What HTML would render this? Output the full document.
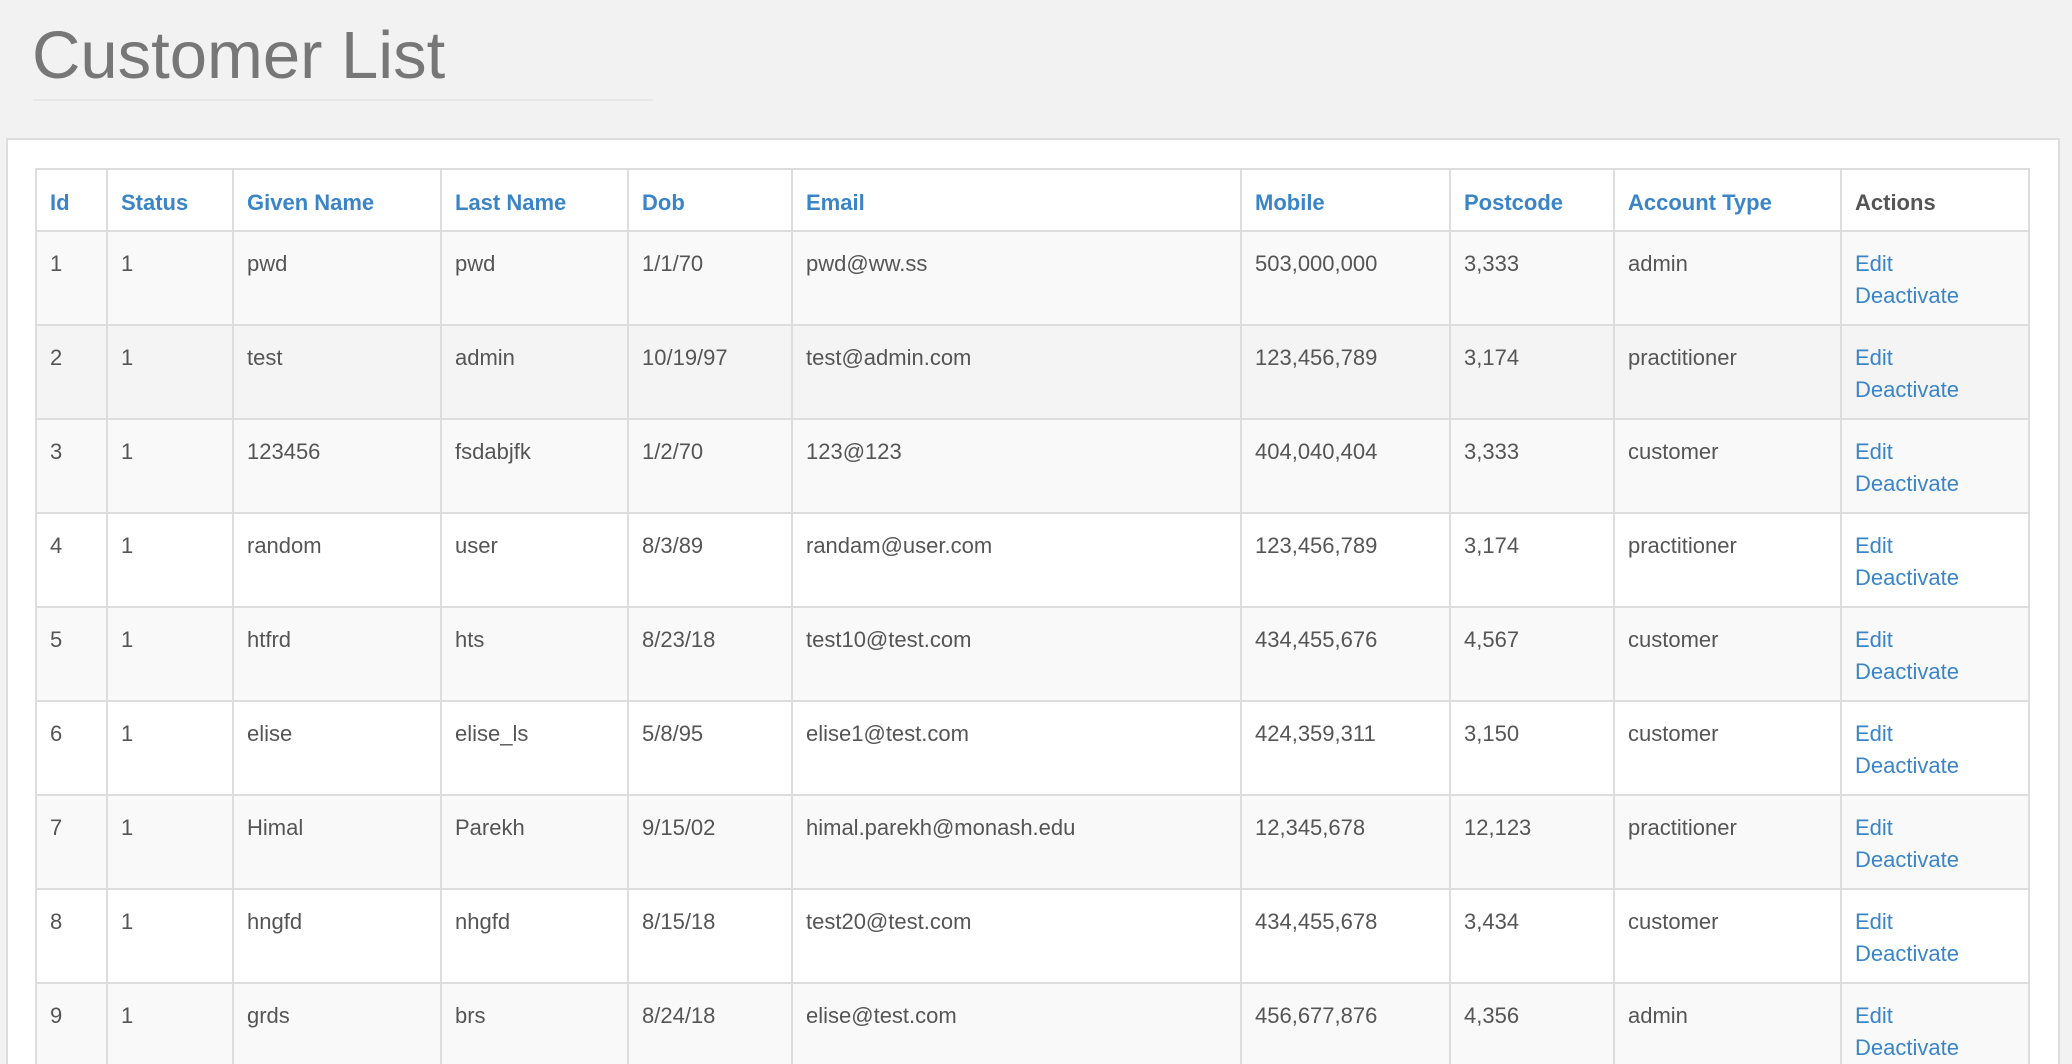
<!DOCTYPE html>
<html><head><meta charset="utf-8"><style>
*{margin:0;padding:0;box-sizing:border-box}
html,body{width:2072px;height:1064px;overflow:hidden;background:#f2f2f2;font-family:"Liberation Sans",Arial,sans-serif}
#wrap{position:relative;width:2072px;height:1064px;overflow:hidden}
h1{position:absolute;left:32px;top:22px;font-size:67px;line-height:68px;font-weight:normal;color:#777}
.hr{position:absolute;left:33px;top:99px;width:620px;height:2px;background:#e8e8e8}
.panel{position:absolute;left:6px;top:138px;width:2054px;height:940px;background:#fff;border:2px solid #ddd}
.clip{position:absolute;left:0;top:0;width:2072px;height:1064px;overflow:hidden}
table{position:absolute;left:35px;top:168px;border-collapse:collapse;table-layout:fixed;width:1995px;font-size:22px;color:#555}
td,th{border:2px solid #ddd;padding:16px 13px 10px 13px;line-height:32px;vertical-align:top;text-align:left;white-space:nowrap;overflow:hidden}
th{font-weight:bold;color:#3a84c8;height:62px;padding-top:17px;padding-bottom:9px}
th.a{color:#555}
tbody tr{height:94px}
tbody tr:nth-child(odd){background:#f9f9f9}
tbody tr.h{background:#f4f4f4}
a{color:#3a84c8;text-decoration:none}
</style></head><body><div id="wrap">
<h1>Customer List</h1>
<div class="hr"></div>
<div class="clip">
<div class="panel"></div>
<table>
<colgroup><col style="width:71px"><col style="width:126px"><col style="width:208px"><col style="width:187px"><col style="width:164px"><col style="width:449px"><col style="width:209px"><col style="width:164px"><col style="width:227px"><col style="width:188px"></colgroup>
<thead><tr><th>Id</th><th>Status</th><th>Given Name</th><th>Last Name</th><th>Dob</th><th>Email</th><th>Mobile</th><th>Postcode</th><th>Account Type</th><th class="a">Actions</th></tr></thead>
<tbody>
<tr><td>1</td><td>1</td><td>pwd</td><td>pwd</td><td>1/1/70</td><td>pwd@ww.ss</td><td>503,000,000</td><td>3,333</td><td>admin</td><td><a>Edit</a><br><a>Deactivate</a></td></tr>
<tr class="h"><td>2</td><td>1</td><td>test</td><td>admin</td><td>10/19/97</td><td>test@admin.com</td><td>123,456,789</td><td>3,174</td><td>practitioner</td><td><a>Edit</a><br><a>Deactivate</a></td></tr>
<tr><td>3</td><td>1</td><td>123456</td><td>fsdabjfk</td><td>1/2/70</td><td>123@123</td><td>404,040,404</td><td>3,333</td><td>customer</td><td><a>Edit</a><br><a>Deactivate</a></td></tr>
<tr><td>4</td><td>1</td><td>random</td><td>user</td><td>8/3/89</td><td>randam@user.com</td><td>123,456,789</td><td>3,174</td><td>practitioner</td><td><a>Edit</a><br><a>Deactivate</a></td></tr>
<tr><td>5</td><td>1</td><td>htfrd</td><td>hts</td><td>8/23/18</td><td>test10@test.com</td><td>434,455,676</td><td>4,567</td><td>customer</td><td><a>Edit</a><br><a>Deactivate</a></td></tr>
<tr><td>6</td><td>1</td><td>elise</td><td>elise_ls</td><td>5/8/95</td><td>elise1@test.com</td><td>424,359,311</td><td>3,150</td><td>customer</td><td><a>Edit</a><br><a>Deactivate</a></td></tr>
<tr><td>7</td><td>1</td><td>Himal</td><td>Parekh</td><td>9/15/02</td><td>himal.parekh@monash.edu</td><td>12,345,678</td><td>12,123</td><td>practitioner</td><td><a>Edit</a><br><a>Deactivate</a></td></tr>
<tr><td>8</td><td>1</td><td>hngfd</td><td>nhgfd</td><td>8/15/18</td><td>test20@test.com</td><td>434,455,678</td><td>3,434</td><td>customer</td><td><a>Edit</a><br><a>Deactivate</a></td></tr>
<tr><td>9</td><td>1</td><td>grds</td><td>brs</td><td>8/24/18</td><td>elise@test.com</td><td>456,677,876</td><td>4,356</td><td>admin</td><td><a>Edit</a><br><a>Deactivate</a></td></tr>
</tbody></table>
</div>
</div></body></html>
